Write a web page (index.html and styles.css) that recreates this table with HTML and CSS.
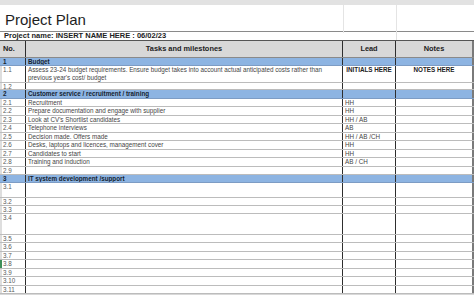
FILE: index.html
```html
<!DOCTYPE html>
<html>
<head>
<meta charset="utf-8">
<link rel="stylesheet" href="styles.css">
</head>
<body>
<div class="sheet">
  <div class="topband"></div>
  <div class="title-row">
    <div class="title">Project Plan</div>
    <div class="gl"></div>
    <div class="gl"></div>
    <div></div>
  </div>
  <div class="pname">Project name: INSERT NAME HERE : 06/02/23</div>
  <div class="row head">
    <div class="c no">No.</div>
    <div class="c ctr">Tasks and milestones</div>
    <div class="c ctr">Lead</div>
    <div class="c ctr last">Notes</div>
    <div class="edge"></div>
  </div>

  <div class="row sec h8"><div class="c no">1</div><div class="c">Budget</div><div class="c"></div><div class="c last"></div><div class="edge"></div></div>
  <div class="row h17"><div class="c no">1.1</div><div class="c">Assess 23-24 budget requirements. Ensure budget takes into account actual anticipated costs rather than<br>previous year's cost/ budget</div><div class="c ctr b">INITIALS HERE</div><div class="c ctr b last">NOTES HERE</div><div class="edge"></div></div>
  <div class="row h7"><div class="c no">1.2</div><div class="c"></div><div class="c"></div><div class="c last"></div><div class="edge"></div></div>

  <div class="row sec h9"><div class="c no">2</div><div class="c">Customer service / recruitment / training</div><div class="c"></div><div class="c last"></div><div class="edge"></div></div>
  <div class="row hr"><div class="c no">2.1</div><div class="c">Recruitment</div><div class="c">HH</div><div class="c last"></div><div class="edge"></div></div>
  <div class="row hr"><div class="c no">2.2</div><div class="c">Prepare documentation and engage with supplier</div><div class="c">HH</div><div class="c last"></div><div class="edge"></div></div>
  <div class="row hr"><div class="c no">2.3</div><div class="c">Look at CV's Shortlist candidates</div><div class="c">HH / AB</div><div class="c last"></div><div class="edge"></div></div>
  <div class="row hr"><div class="c no">2.4</div><div class="c">Telephone interviews</div><div class="c">AB</div><div class="c last"></div><div class="edge"></div></div>
  <div class="row hr"><div class="c no">2.5</div><div class="c">Decision made. Offers made</div><div class="c">HH / AB /CH</div><div class="c last"></div><div class="edge"></div></div>
  <div class="row hr"><div class="c no">2.6</div><div class="c">Desks, laptops and licences, management cover</div><div class="c">HH</div><div class="c last"></div><div class="edge"></div></div>
  <div class="row hr"><div class="c no">2.7</div><div class="c">Candidates to start</div><div class="c">HH</div><div class="c last"></div><div class="edge"></div></div>
  <div class="row hr"><div class="c no">2.8</div><div class="c">Training and induction</div><div class="c">AB / CH</div><div class="c last"></div><div class="edge"></div></div>
  <div class="row hr"><div class="c no">2.9</div><div class="c"></div><div class="c"></div><div class="c last"></div><div class="edge"></div></div>

  <div class="row sec h8"><div class="c no">3</div><div class="c">IT system development /support</div><div class="c"></div><div class="c last"></div><div class="edge"></div></div>
  <div class="row h15"><div class="c no">3.1</div><div class="c"></div><div class="c"></div><div class="c last"></div><div class="edge"></div></div>
  <div class="row h8"><div class="c no">3.2</div><div class="c"></div><div class="c"></div><div class="c last"></div><div class="edge"></div></div>
  <div class="row h8"><div class="c no">3.3</div><div class="c"></div><div class="c"></div><div class="c last"></div><div class="edge"></div></div>
  <div class="row h21"><div class="c no">3.4</div><div class="c"></div><div class="c"></div><div class="c last"></div><div class="edge"></div></div>
  <div class="row hr"><div class="c no">3.5</div><div class="c"></div><div class="c"></div><div class="c last"></div><div class="edge"></div></div>
  <div class="row hr"><div class="c no">3.6</div><div class="c"></div><div class="c"></div><div class="c last"></div><div class="edge"></div></div>
  <div class="row hr"><div class="c no">3.7</div><div class="c"></div><div class="c"></div><div class="c last"></div><div class="edge"></div></div>
  <div class="row hr sel"><div class="c no">3.8</div><div class="c"></div><div class="c"></div><div class="c last"></div><div class="edge"></div></div>
  <div class="row hr"><div class="c no">3.9</div><div class="c"></div><div class="c"></div><div class="c last"></div><div class="edge"></div></div>
  <div class="row hr"><div class="c no">3.10</div><div class="c"></div><div class="c"></div><div class="c last"></div><div class="edge"></div></div>
  <div class="row hr"><div class="c no">3.11</div><div class="c"></div><div class="c"></div><div class="c last"></div><div class="edge"></div></div>
  <div class="bottomband"></div>
</div>
</body>
</html>
```

FILE: styles.css
```css
html, body {
  margin: 0;
  padding: 0;
  background: #ffffff;
}
body {
  width: 474px;
  height: 295px;
  overflow: hidden;
  font-family: "Liberation Sans", Arial, sans-serif;
}
.sheet {
  width: 474px;
  display: flex;
  flex-direction: column;
}
.topband {
  height: 5px;
  background: #e2e2e2;
}
.title-row {
  height: 26px;
  display: grid;
  grid-template-columns: 343px 53px 76px 2px;
  border-bottom: 1px solid #8a8a8a;
}
.title {
  font-size: 15px;
  line-height: 26px;
  padding-left: 5px;
  color: #1e1e1e;
  padding-top: 2px;
  box-sizing: border-box;
}
.gl {
  border-left: 1px solid #e4e4e4;
}
.pname {
  height: 9px;
  box-sizing: border-box;
  font-size: 7.5px;
  font-weight: bold;
  line-height: 8px;
  padding-left: 4px;
  color: #222;
  border-bottom: 1px solid #555;
  background: linear-gradient(to right, transparent 396px, #e0e0e0 396px, #e0e0e0 397px, transparent 397px);
}
.row {
  display: grid;
  grid-template-columns: 26px 317px 53px 76px 2px;
  box-sizing: border-box;
  border-bottom: 1px solid #bcbcbc;
  font-size: 6.3px;
  line-height: 8px;
  color: #454545;
}
.c {
  border-right: 1px solid #2e2e2e;
  padding-left: 2px;
  white-space: nowrap;
  overflow: hidden;
}
.c.last {
  border-right: none;
}
.c.no {
  padding-left: 3px;
  box-shadow: inset 2px 0 0 #dedede;
  color: #5a5a5a;
}
.edge {
  background: #7a7a7a;
}
.ctr {
  text-align: center;
  padding-left: 0;
}
.b {
  font-weight: bold;
  color: #222;
}
.head {
  height: 17px;
  background: #d8d8d8;
  font-size: 7.4px;
  font-weight: bold;
  line-height: 16px;
  color: #222;
  border-bottom: 1px solid #8a8a8a;
}
.head .c.no {
  color: #222;
  box-shadow: none;
}
.sec {
  background: #8db4e2;
  font-weight: bold;
  color: #141e30;
  border-bottom: 1px solid #7d9cc4;
}
.sec .c.no {
  color: #141e30;
  box-shadow: none;
}
.h7 { height: 7px; line-height: 7px; }
.h8 { height: 8px; }
.h9 { height: 9px; }
.h15 { height: 15px; }
.h17 { height: 17px; }
.h21 { height: 21px; }
.hr { height: 8.44px; }
.sel .c.no {
  box-shadow: inset 2px 0 0 #3f8f5a;
}
.bottomband {
  height: 3px;
  background: #d8d8d8;
}
```
